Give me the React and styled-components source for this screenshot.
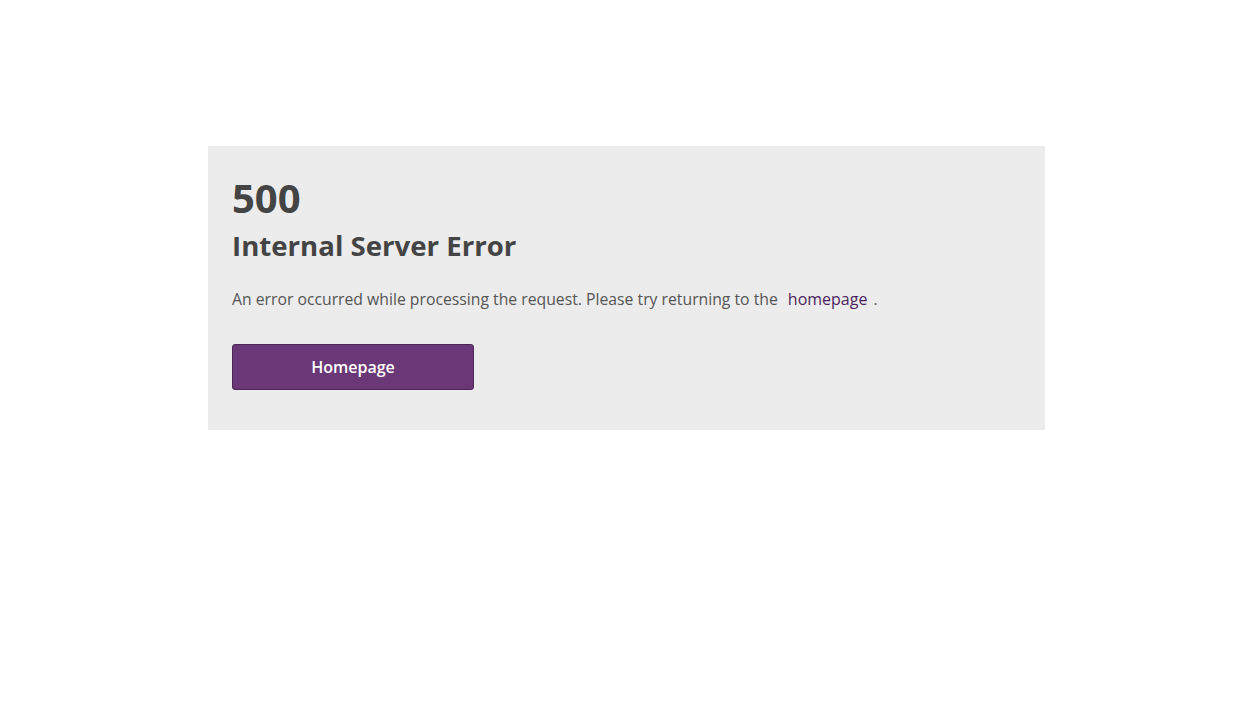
import React from "react";
import styled, { createGlobalStyle } from "styled-components";

const Global = createGlobalStyle`
  html, body { margin: 0; padding: 0; background: #fff; }
  body { font-family: "Open Sans", "Noto Sans", sans-serif; color: #444; }
`;

const Panel = styled.section`
  box-sizing: border-box;
  width: 837px;
  margin: 146px 0 0 calc(50% - 417px);
  padding: 28px 24px 40px 24px;
  background: #ececec;
`;

const Code = styled.h1`
  margin: 0;
  font-size: 40px;
  font-weight: 700;
  line-height: 48px;
  color: #444;
`;

const Title = styled.h2`
  margin: 3px 0 20px;
  font-size: 27.6px;
  font-weight: 700;
  line-height: 40px;
  color: #444;
`;

const Text = styled.p`
  margin: 0 0 31px;
  font-size: 15.75px;
  line-height: 28px;
  color: #555;
`;

const Link = styled.a`
  color: #4b1f5e;
  font-size: 16px;
  text-decoration: none;
  margin: 0 6px 0 10px;
`;

const Button = styled.a`
  display: flex;
  align-items: center;
  justify-content: center;
  box-sizing: border-box;
  width: 242px;
  height: 46px;
  background: #6b3877;
  border: 1px solid #4e2459;
  border-radius: 3px;
  color: #fff;
  font-size: 16px;
  font-weight: 600;
  text-decoration: none;
`;

export default function App() {
  return (
    <>
      <Global />
      <Panel>
        <Code>500</Code>
        <Title>Internal Server Error</Title>
        <Text>
          An error occurred while processing the request. Please try returning to the
          <Link href="#">homepage</Link>.
        </Text>
        <Button href="#">Homepage</Button>
      </Panel>
    </>
  );
}
